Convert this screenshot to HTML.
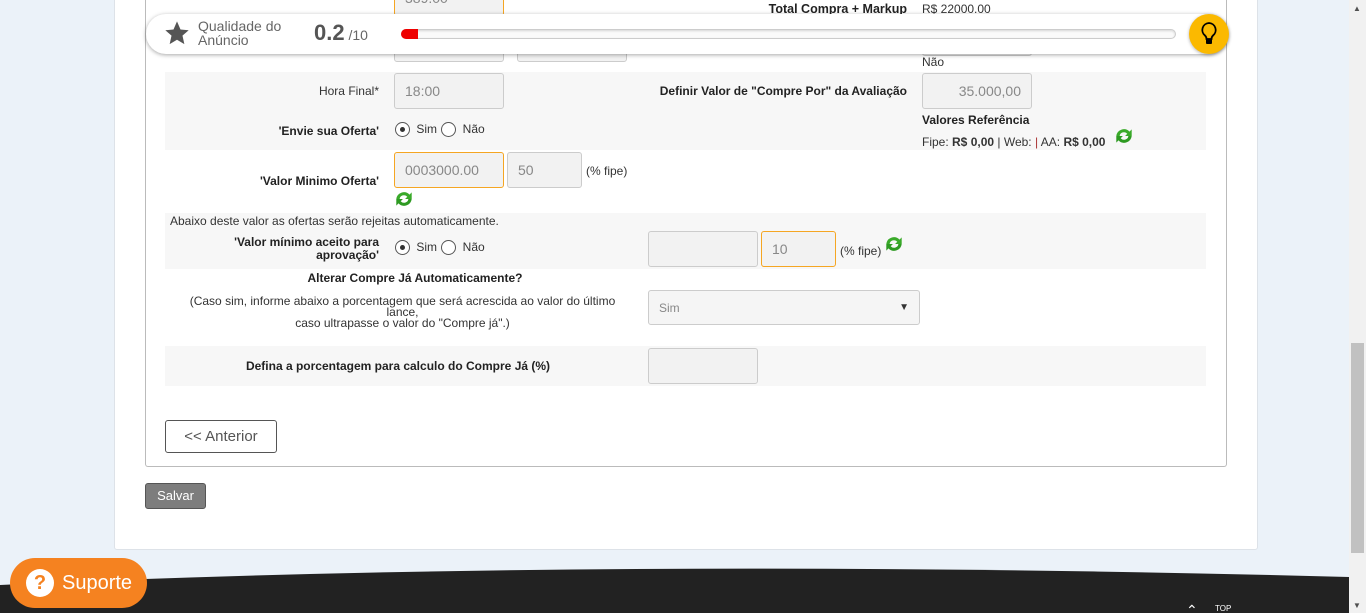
<!DOCTYPE html>
<html><head><meta charset="utf-8">
<style>
*{box-sizing:border-box;margin:0;padding:0}
html{overflow:hidden;width:1366px;height:613px}
body{width:1366px;height:613px;overflow:hidden;background:#ebf2f9;font-family:"Liberation Sans",sans-serif;font-size:12px;color:#333;position:relative}
.a{position:absolute}
.panel{left:114px;top:-10px;width:1144px;height:560px;background:#fff;border:1px solid #dde2e8;border-radius:3px}
.inner{left:145px;top:-10px;width:1082px;height:477px;background:#fff;border:1px solid #bbb;border-top:none;border-radius:0 0 3px 3px}
.g{background:#f7f7f7}
.inp{background:#f2f2f2;border:1px solid #ccc;border-radius:3px;color:#888;font-size:14px;padding:0 10px;line-height:34px;height:36px}
.or{border-color:#f5a623}
.b{font-weight:bold;color:#222}
.r{text-align:right}
.rad{width:15px;height:15px;border:1px solid #555;border-radius:50%;display:inline-block;vertical-align:middle;position:relative;background:#fff;margin:0 3px 0 1px}
.rad.on::after{content:"";position:absolute;left:4px;top:4px;width:5px;height:5px;border-radius:50%;background:#333}
.ref{width:22px;height:20px}
</style></head><body>
<div class="a panel"></div>
<div class="a inner"></div>

<div class="a inp or" style="left:394px;top:-20px;width:110px;">389.00</div>
<div class="a b r" style="left:600px;top:2px;width:307px;font-size:12.5px">Total Compra + Markup</div>
<div class="a" style="left:922px;top:2px;">R$ 22000.00</div>
<div class="a inp" style="left:394px;top:26px;width:110px;height:36px"></div>
<div class="a inp" style="left:517px;top:26px;width:110px;height:36px"></div>
<div class="a inp" style="left:922px;top:20px;width:110px;height:36px"></div>
<div class="a" style="left:922px;top:55px;">Não</div>

<div class="a g" style="left:165px;top:72px;width:1041px;height:78px"></div>
<div class="a g" style="left:165px;top:213px;width:1041px;height:56px"></div>
<div class="a g" style="left:165px;top:346px;width:1041px;height:40px"></div>

<div class="a r" style="left:165px;top:84px;width:214px">Hora Final*</div>
<div class="a inp" style="left:394px;top:73px;width:110px;">18:00</div>
<div class="a b r" style="left:600px;top:84px;width:307px">Definir Valor de "Compre Por" da Avaliação</div>
<div class="a inp r" style="left:922px;top:73px;width:110px;">35.000,00</div>
<div class="a b" style="left:922px;top:113px">Valores Referência</div>
<div class="a" style="left:922px;top:135px">Fipe: <b>R$ 0,00</b> | Web: <span style="color:#a33">|</span> AA: <b>R$ 0,00</b></div>
<svg class="a ref" style="left:1113px;top:126px" viewBox="0 0 20 18"><path d="M3 9a7 7 0 0 1 12-4l2-2v6h-6l2-2a4 4 0 0 0-7 2z" fill="#3aaa2a"/><path d="M17 9a7 7 0 0 1-12 4l-2 2V9h6l-2 2a4 4 0 0 0 7-2z" fill="#2e9a22"/></svg>

<div class="a b r" style="left:165px;top:124px;width:214px">'Envie sua Oferta'</div>
<div class="a" style="left:394px;top:122px"><span class="rad on"></span> Sim <span class="rad"></span> Não</div>

<div class="a b r" style="left:165px;top:174px;width:214px">'Valor Minimo Oferta'</div>
<div class="a inp or" style="left:394px;top:152px;width:110px;">0003000.00</div>
<div class="a inp" style="left:507px;top:152px;width:75px;">50</div>
<div class="a" style="left:586px;top:164px">(% fipe)</div>
<svg class="a ref" style="left:393px;top:189px" viewBox="0 0 20 18"><path d="M3 9a7 7 0 0 1 12-4l2-2v6h-6l2-2a4 4 0 0 0-7 2z" fill="#3aaa2a"/><path d="M17 9a7 7 0 0 1-12 4l-2 2V9h6l-2 2a4 4 0 0 0 7-2z" fill="#2e9a22"/></svg>

<div class="a" style="left:170px;top:214px">Abaixo deste valor as ofertas serão rejeitas automaticamente.</div>
<div class="a b r" style="left:165px;top:236px;width:214px;line-height:13px">'Valor mínimo aceito para<br>aprovação'</div>
<div class="a" style="left:394px;top:240px"><span class="rad on"></span> Sim <span class="rad"></span> Não</div>
<div class="a inp" style="left:648px;top:231px;width:110px;"></div>
<div class="a inp or" style="left:761px;top:231px;width:75px;">10</div>
<div class="a" style="left:840px;top:244px">(% fipe)</div>
<svg class="a ref" style="left:883px;top:234px" viewBox="0 0 20 18"><path d="M3 9a7 7 0 0 1 12-4l2-2v6h-6l2-2a4 4 0 0 0-7 2z" fill="#3aaa2a"/><path d="M17 9a7 7 0 0 1-12 4l-2 2V9h6l-2 2a4 4 0 0 0 7-2z" fill="#2e9a22"/></svg>

<div class="a b" style="left:165px;top:271px;width:500px;text-align:center">Alterar Compre Já Automaticamente?</div>
<div class="a" style="left:175px;top:296px;width:455px;text-align:center;line-height:11px">(Caso sim, informe abaixo a porcentagem que será acrescida ao valor do último lance,<br>caso ultrapasse o valor do "Compre já".)</div>
<div class="a inp" style="left:648px;top:290px;width:272px;height:35px;font-size:12px;background:#f5f5f5">Sim<span style="position:absolute;right:10px;top:0;font-size:10px;color:#333">▼</span></div>

<div class="a b" style="left:165px;top:359px;width:466px;text-align:center">Defina a porcentagem para calculo do Compre Já (%)</div>
<div class="a inp" style="left:648px;top:348px;width:110px;"></div>

<div class="a" style="left:165px;top:420px;width:112px;height:33px;border:1px solid #555;border-radius:3px;font-size:15px;color:#555;line-height:31px;text-align:center">&lt;&lt; Anterior</div>
<div class="a" style="left:145px;top:483px;width:61px;height:26px;background:#7d7d7d;border:1px solid #555;border-radius:3px;color:#fff;font-size:13px;line-height:24px;text-align:center">Salvar</div>

<div class="a" style="left:146px;top:14px;width:1082px;height:40px;background:#fff;border-radius:20px;box-shadow:0 1px 4px rgba(0,0,0,.35)"></div>
<svg class="a" style="left:163px;top:19px" width="28" height="28" viewBox="0 0 24 24"><path d="M12 2l3 7 7 .6-5.3 4.6 1.6 7.3L12 17.8 5.7 21.5l1.6-7.3L2 9.6 9 9z" fill="#555"/></svg>
<div class="a" style="left:198px;top:19px;font-size:14px;color:#666;line-height:14px">Qualidade do<br>Anúncio</div>
<div class="a" style="left:314px;top:20px;font-size:22px;font-weight:bold;color:#555">0.2<span style="font-size:14px;font-weight:normal;color:#666"> /10</span></div>
<div class="a" style="left:401px;top:29px;width:775px;height:10px;border:1px solid #ccc;border-radius:5px;background:#fafafa;box-shadow:inset 0 1px 2px rgba(0,0,0,.15)"></div>
<div class="a" style="left:401px;top:29px;width:17px;height:10px;border-radius:5px 0 0 5px;background:#e00"></div>
<div class="a" style="left:1189px;top:14px;width:40px;height:40px;border-radius:50%;background:#fbb900;box-shadow:0 1px 3px rgba(0,0,0,.3)"></div>
<svg class="a" style="left:1198px;top:20px" width="22" height="28" viewBox="0 0 22 28"><path d="M11 3a7 7 0 0 0-4 12.5c1 1 1.5 2 1.5 3.5h5c0-1.5.5-2.5 1.5-3.5A7 7 0 0 0 11 3z" fill="none" stroke="#000" stroke-width="1.8"/><rect x="8" y="19" width="6" height="5" rx="1" fill="#000"/></svg>

<svg class="a" style="left:0;top:565px" width="1349" height="48" viewBox="0 0 1349 48" preserveAspectRatio="none"><path d="M0 20Q600 -8 1349 12V48H0z" fill="#222"/></svg>
<div class="a" style="left:10px;top:558px;width:137px;height:50px;border-radius:25px;background:#f58220"></div>
<div class="a" style="left:26px;top:569px;width:28px;height:28px;border-radius:50%;background:#fff;color:#f58220;font-weight:bold;font-size:20px;text-align:center;line-height:28px">?</div>
<div class="a" style="left:62px;top:572px;color:#fff;font-size:20px">Suporte</div>
<div class="a" style="left:1186px;top:602px;color:#fff;font-size:14px">⌃</div>
<div class="a" style="left:1215px;top:604px;color:#fff;font-size:8px">TOP</div>

<div class="a" style="left:1349px;top:0;width:17px;height:613px;background:#f1f1f1"></div>
<div class="a" style="left:1351px;top:343px;width:13px;height:210px;background:#c1c1c1"></div>
<div class="a" style="left:1353px;top:4px;font-size:8px;color:#505050">▲</div>
<div class="a" style="left:1353px;top:601px;font-size:8px;color:#505050">▼</div>
</body></html>
